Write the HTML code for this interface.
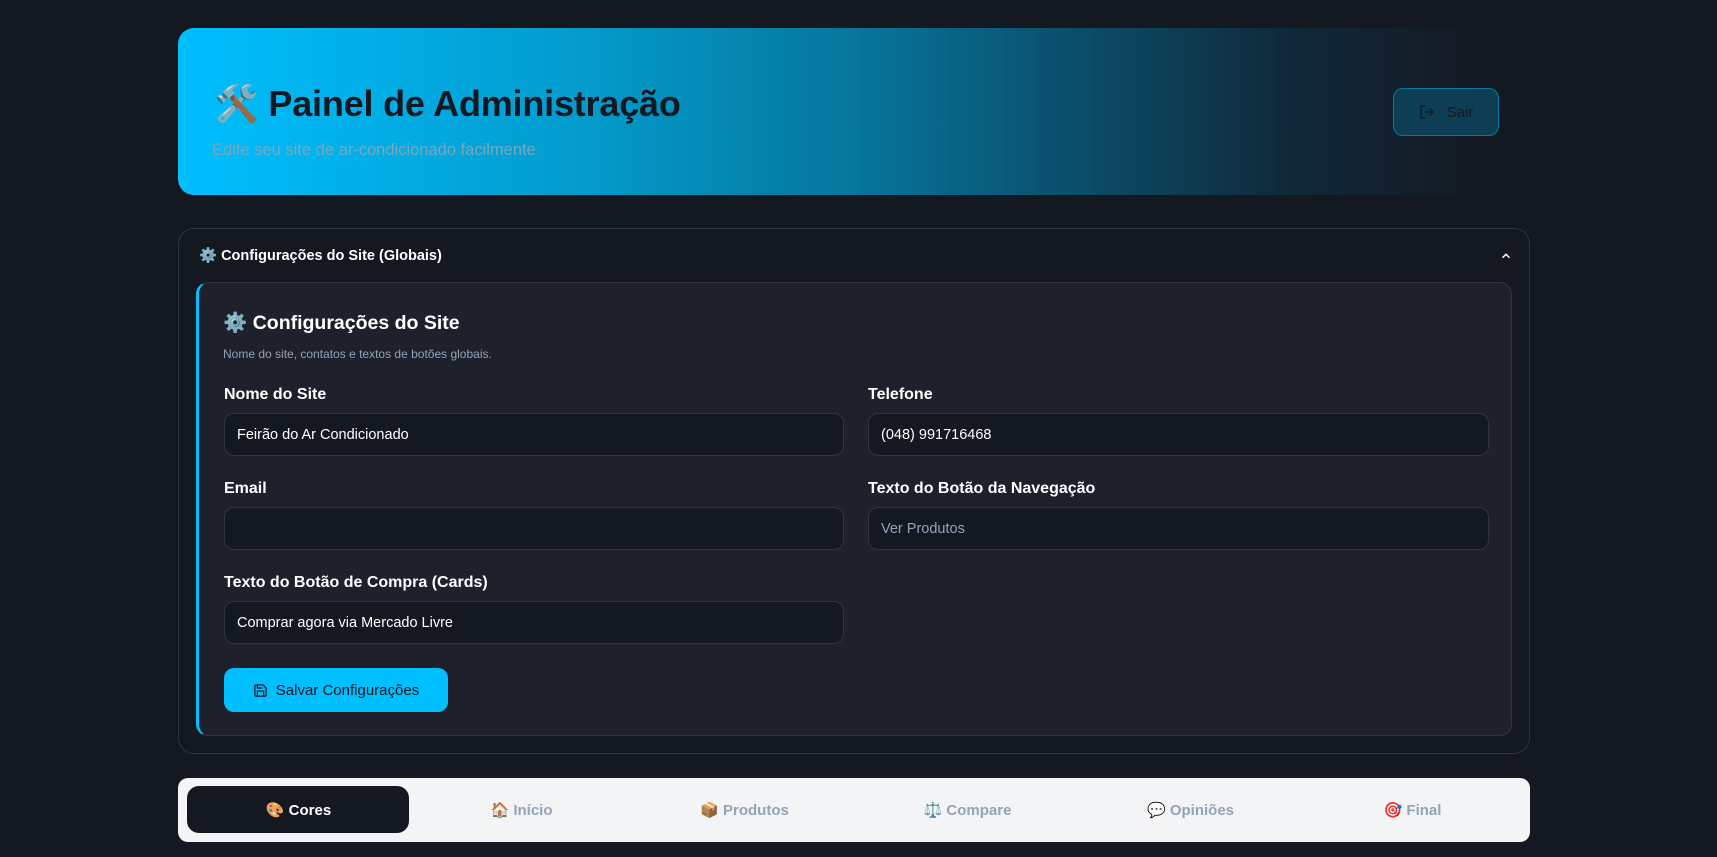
<!DOCTYPE html>
<html><head><meta charset="utf-8"><style>
*{box-sizing:border-box;margin:0;padding:0}
body{width:1717px;height:857px;background:#141821;font-family:"Liberation Sans","Noto Sans CJK JP",sans-serif;position:relative;overflow:hidden;color:#fff}
.abs{position:absolute}
.hdr{left:178px;top:28px;width:1352px;height:167px;border-radius:16px;background:linear-gradient(90deg,#00bfff 0%,#039bcc 30%,#06769c 50%,#0b4a66 68%,#10293a 82%,#141821 97%)}
.hdr h1{position:absolute;left:36px;top:55px;font-size:36px;font-weight:bold;color:#141821;letter-spacing:-0.2px}
.hdr p{position:absolute;left:34px;top:113px;font-size:16.5px;color:#7aa7bd}
.sair{left:1393px;top:88px;width:106px;height:48px;border:1px solid #0b7aa3;border-radius:10px;background:#0e3e56;color:#141821;font-size:15px;display:flex;align-items:center;justify-content:center;gap:12px}
.panel{left:178px;top:228px;width:1352px;height:526px;border:1px solid #2e3441;border-radius:16px}
.ph{left:20px;top:18px;font-size:14.5px;font-weight:bold;color:#fff}
.card{left:196px;top:282px;width:1316px;height:454px;background:#1e212b;border:1px solid #2e3441;border-left:3px solid #00bfff;border-radius:12px}
.card h2{position:absolute;left:24px;top:28px;font-size:19.5px;font-weight:bold;color:#fff}
.card .d{position:absolute;left:24px;top:64px;font-size:12px;color:#94a3b8}
.lbl{font-size:16px;font-weight:bold;color:#fff}
.inp{height:43px;border:1px solid #2e3441;border-radius:10px;background:#141821;font-size:14.5px;color:#fff;padding:0 12px;display:flex;align-items:center}
.btn{left:224px;top:668px;width:224px;height:44px;background:#00bfff;border-radius:10px;color:#141821;font-size:15px;display:flex;align-items:center;justify-content:center;gap:8px}
.tabs{left:178px;top:778px;width:1352px;height:64px;background:#f3f4f6;border-radius:10px}
.act{left:9px;top:8px;width:222px;height:47px;background:#141821;border-radius:12px}
.tab{top:0;height:64px;width:225px;display:flex;align-items:center;justify-content:center;font-size:15px;font-weight:bold;color:#94a3b8;gap:6px}
</style></head><body>
<div class="abs hdr"><h1>🛠️ Painel de Administração</h1><p>Edite seu site de ar-condicionado facilmente</p></div>
<div class="abs sair"><svg width="16" height="16" viewBox="0 0 24 24" fill="none" stroke="#141821" stroke-width="2"><path d="M9 21H5a2 2 0 0 1-2-2V5a2 2 0 0 1 2-2h4M16 17l5-5-5-5M21 12H9"/></svg><span style="color:#141821">Sair</span></div>
<div class="abs panel">
<div class="abs ph">⚙️ Configurações do Site (Globais)</div>
<svg class="abs" style="left:1320px;top:20px" width="14" height="14" viewBox="0 0 24 24" fill="none" stroke="#fff" stroke-width="2.5"><path d="M6 15l6-6 6 6"/></svg>
</div>
<div class="abs card"><h2>⚙️ Configurações do Site</h2><div class="d">Nome do site, contatos e textos de botões globais.</div></div>
<div class="abs lbl" style="left:224px;top:386px">Nome do Site</div>
<div class="abs inp" style="left:224px;top:413px;width:620px">Feirão do Ar Condicionado</div>
<div class="abs lbl" style="left:868px;top:386px">Telefone</div>
<div class="abs inp" style="left:868px;top:413px;width:621px">(048) 991716468</div>
<div class="abs lbl" style="left:224px;top:480px">Email</div>
<div class="abs inp" style="left:224px;top:507px;width:620px"></div>
<div class="abs lbl" style="left:868px;top:480px">Texto do Botão da Navegação</div>
<div class="abs inp" style="left:868px;top:507px;width:621px;color:#94a3b8">Ver Produtos</div>
<div class="abs lbl" style="left:224px;top:574px">Texto do Botão de Compra (Cards)</div>
<div class="abs inp" style="left:224px;top:601px;width:620px">Comprar agora via Mercado Livre</div>
<div class="abs btn"><svg width="15" height="15" viewBox="0 0 24 24" fill="none" stroke="#141821" stroke-width="2"><path d="M19 21H5a2 2 0 0 1-2-2V5a2 2 0 0 1 2-2h11l5 5v11a2 2 0 0 1-2 2z"/><path d="M17 21v-8H7v8M7 3v5h8"/></svg>Salvar Configurações</div>
<div class="abs tabs">
<div class="abs act"></div>
<div class="abs tab" style="left:8px;color:#fff">🎨 Cores</div>
<div class="abs tab" style="left:231px">🏠 Início</div>
<div class="abs tab" style="left:454px">📦 Produtos</div>
<div class="abs tab" style="left:677px">⚖️ Compare</div>
<div class="abs tab" style="left:900px">💬 Opiniões</div>
<div class="abs tab" style="left:1122px">🎯 Final</div>
</div>
</body></html>
